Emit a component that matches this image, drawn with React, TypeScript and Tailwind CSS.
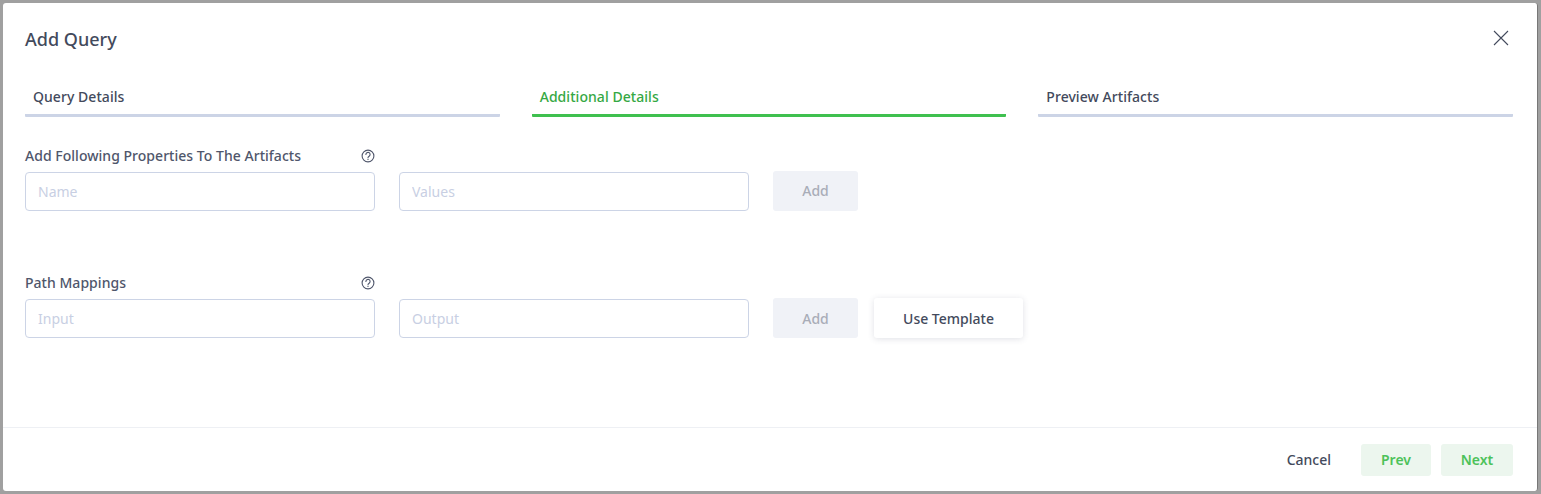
const font = "font-['Noto_Sans',sans-serif]"

function CloseIcon() {
  return (
    <svg width="16" height="16" viewBox="0 0 16 16" fill="none" stroke="#434a5c" strokeWidth="1.1" className="mt-[27px]">
      <path d="M1 1l14 14M15 1L1 15" />
    </svg>
  )
}

function HelpIcon() {
  return (
    <svg width="14" height="14" viewBox="0 0 14 14" fill="none" stroke="#4f566b" strokeWidth="1.1">
      <circle cx="7" cy="7" r="5.9" />
      <path d="M4.9 5.5a2.1 2.1 0 1 1 3.3 1.7c-.7.5-1.2.8-1.2 1.5" strokeLinecap="round" />
      <circle cx="7" cy="10.4" r="0.6" fill="#4f566b" stroke="none" />
    </svg>
  )
}

function Step({ label, active }: { label: string; active?: boolean }) {
  return (
    <div className={`flex-1 h-[42px] border-b-[3px] rounded-b-[1px] pl-2 pt-[12px] text-sm font-medium leading-[20px] tracking-[0.05px] ${active ? "border-[#3fc04f] text-[#35a843]" : "border-[#ccd4e6] text-[#434a5c]"}`}>
      {label}
    </div>
  )
}

function Field({ placeholder }: { placeholder: string }) {
  return (
    <input
      placeholder={placeholder}
      className="w-[350px] h-[39px] mt-px border border-[#ccd4e6] rounded-[4px] px-3 text-sm outline-none placeholder:text-[#c8cfe3]"
    />
  )
}

function AddButton({ lower }: { lower?: boolean }) {
  return (
    <button className={`w-[85px] h-10 rounded-[3px] bg-[#f0f2f7] text-sm font-medium text-[#a9adb8] ${lower ? "pt-[2px]" : ""}`}>Add</button>
  )
}

export default function App() {
  return (
    <div className={`${font} w-[1541px] h-[494px] bg-[#a0a0a0] pl-[3px] pt-[3px] pr-[3px] pb-[3px]`}>
      <div className="flex flex-col h-full bg-white rounded-[3px] border-r border-[#777]">
        <div className="flex items-start justify-between h-[72px] pl-[22px] pr-[28px]">
          <h1 className="mt-[22px] text-lg font-medium leading-[28px] text-[#434a5c]">Add Query</h1>
          <CloseIcon />
        </div>

        <div className="flex gap-8 pl-[22px] pr-[24px]">
          <Step label="Query Details" />
          <Step label="Additional Details" active />
          <Step label="Preview Artifacts" />
        </div>

        <div className="flex-1 pl-[22px] pt-[29px]">
          <div className="flex items-center w-[350px] h-5 justify-between">
            <span className="text-sm font-medium tracking-[0.03px] text-[#4f566b]">Add Following Properties To The Artifacts</span>
            <HelpIcon />
          </div>
          <div className="flex gap-6 mt-[5px]">
            <Field placeholder="Name" />
            <Field placeholder="Values" />
            <AddButton />
          </div>

          <div className="flex items-center w-[350px] h-5 justify-between mt-[62px]">
            <span className="text-sm font-medium tracking-[0.03px] text-[#4f566b]">Path Mappings</span>
            <HelpIcon />
          </div>
          <div className="flex gap-6 mt-[5px]">
            <Field placeholder="Input" />
            <Field placeholder="Output" />
            <div className="flex gap-4">
              <AddButton lower />
              <button className="w-[149px] h-10 pt-px rounded-[3px] bg-white text-sm font-medium text-[#434a5c] shadow-[0_1px_6px_rgba(60,70,100,0.16)]">Use Template</button>
            </div>
          </div>
        </div>

        <div className="flex items-center justify-end gap-[10px] h-[64px] border-t border-[#eef0f4] pr-[24px]">
          <button className="mr-[20px] text-sm font-medium text-[#434a5c]">Cancel</button>
          <button className="w-[70px] h-8 rounded-[3px] bg-[#ecf6ee] text-sm font-semibold text-[#4cc25a]">Prev</button>
          <button className="w-[72px] h-8 rounded-[3px] bg-[#ecf6ee] text-sm font-semibold text-[#4cc25a]">Next</button>
        </div>
      </div>
    </div>
  )
}
